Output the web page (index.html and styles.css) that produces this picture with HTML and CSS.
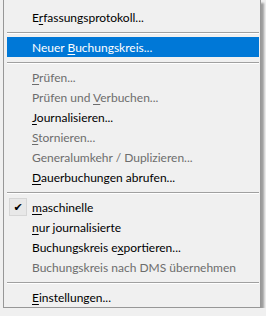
FILE: index.html
```html
<!DOCTYPE html>
<html lang="de">
<head>
  <meta charset="UTF-8" />
  <title>Kontextmenü</title>
  <link rel="stylesheet" href="styles.css">
</head>
<body>
  <div class="menu">
    <div class="item"><span class="label">E<u>r</u>fassungsprotokoll...</span></div>
    <div class="sep"></div>
    <div class="item active"><span class="label">Neuer <u>B</u>uchungskreis...</span></div>
    <div class="sep"></div>
    <div class="item disabled"><span class="label"><u>P</u>rüfen...</span></div>
    <div class="item disabled"><span class="label">Prüfen und <u>V</u>erbuchen...</span></div>
    <div class="item"><span class="label"><u>J</u>ournalisieren...</span></div>
    <div class="item disabled"><span class="label"><u>S</u>tornieren...</span></div>
    <div class="item disabled"><span class="label">Generalumkehr / Duplizieren...</span></div>
    <div class="item"><span class="label"><u>D</u>auerbuchungen abrufen...</span></div>
    <div class="sep"></div>
    <div class="item">
      <span class="check">✔</span>
      <span class="label"><u>m</u>aschinelle</span>
    </div>
    <div class="item"><span class="label"><u>n</u>ur journalisierte</span></div>
    <div class="item"><span class="label">Buchungskreis e<u>x</u>portieren...</span></div>
    <div class="item disabled"><span class="label">Buchungskreis nach DMS übernehmen</span></div>
    <div class="sep"></div>
    <div class="item"><span class="label"><u>E</u>instellungen...</span></div>
  </div>
</body>
</html>
```

FILE: styles.css
```css
* {
  box-sizing: border-box;
  margin: 0;
  padding: 0;
}

body {
  background: #f0f0f0;
  font-family: Lato, 'Noto Sans', sans-serif;
  font-size: 12px;
  color: #000;
}

.menu {
  margin-left: 3px;
  width: 258px;
  background: #f0f0f0;
  border: 1px solid #979797;
  border-top: none;
  padding: 7px 1px 0 3px;
  box-shadow: 3px 3px 2px rgba(0, 0, 0, 0.35);
}

.item {
  position: relative;
  height: 20px;
  display: flex;
  align-items: center;
  padding-left: 25px;
  white-space: nowrap;
}

.item u {
  text-decoration-thickness: 1px;
  text-underline-offset: 2px;
}

.item.active {
  background: #0078d7;
  color: #fff;
}

.item.disabled {
  color: #6d6d6d;
}

.check {
  position: absolute;
  left: 2px;
  top: 1px;
  width: 18px;
  height: 18px;
  display: flex;
  align-items: center;
  justify-content: center;
  border: 1px solid #d6d6d6;
  background: #e8e8e8;
  font-family: 'DejaVu Sans', sans-serif;
  font-size: 11px;
}

.sep {
  height: 10px;
  padding-top: 5px;
}

.sep::before {
  content: "";
  display: block;
  border-top: 1px solid #a0a0a0;
  border-bottom: 1px solid #fff;
}
```
